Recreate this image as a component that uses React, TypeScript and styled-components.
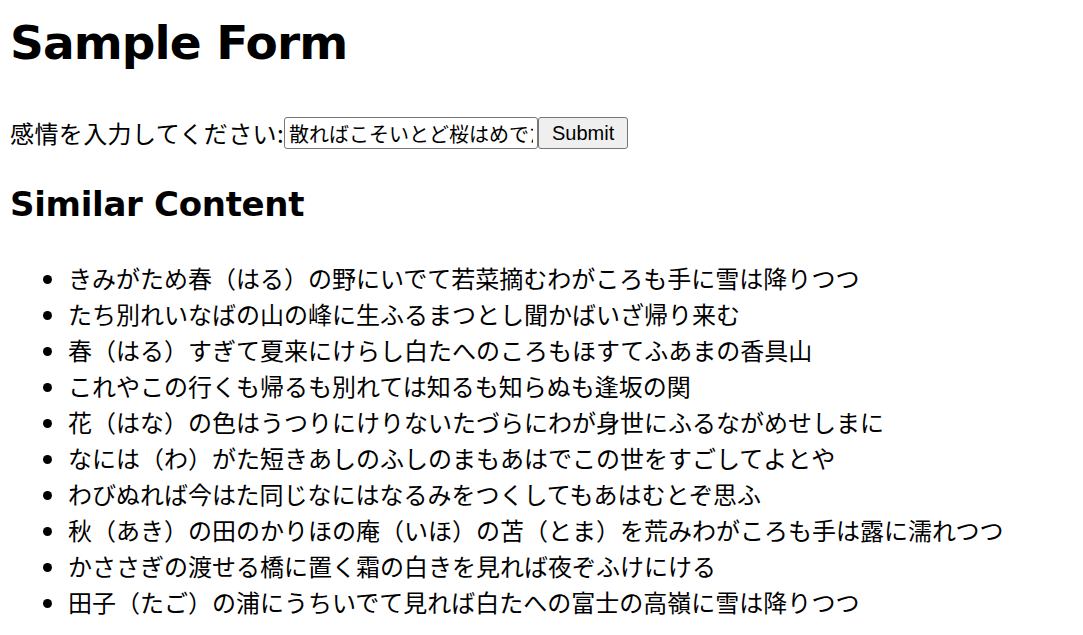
import React from "react";
import styled, { createGlobalStyle } from "styled-components";

const GlobalStyle = createGlobalStyle`
  html, body {
    margin: 0;
    padding: 0;
    background: #ffffff;
  }
  body {
    font-family: "Noto Sans CJK JP", "Noto Sans", sans-serif;
    color: #000000;
  }
`;

const Page = styled.div`
  padding: 7px 10px 0 10px;
`;

const Title = styled.h1`
  margin: 0;
  font-family: "DejaVu Sans", "Noto Sans CJK JP", sans-serif;
  font-weight: 700;
  font-size: 47px;
  line-height: 72px;
  letter-spacing: -0.9px;
`;

const Form = styled.form`
  display: flex;
  align-items: center;
  height: 36px;
  margin-top: 36px;
`;

const Label = styled.label`
  font-size: 24px;
  line-height: 36px;
  letter-spacing: 0.4px;
`;

const TextInput = styled.input`
  box-sizing: border-box;
  width: 254px;
  height: 32px;
  margin: 0;
  padding: 0 4px;
  border: 1px solid #767676;
  border-radius: 3px;
  font-family: "Noto Sans CJK JP", sans-serif;
  font-size: 20px;
  color: #000;
  background: #fff;
  outline: none;
`;

const Button = styled.button`
  box-sizing: border-box;
  height: 32px;
  margin: 0;
  padding: 0 13px;
  border: 1px solid #767676;
  border-radius: 3px;
  background: #efefef;
  font-family: "Liberation Sans", Arial, sans-serif;
  font-size: 20px;
  color: #000;
`;

const Subtitle = styled.h2`
  margin: 26px 0 0 0;
  font-family: "DejaVu Sans", "Noto Sans CJK JP", sans-serif;
  font-weight: 700;
  font-size: 34px;
  line-height: 54px;
  letter-spacing: -0.3px;
`;

const List = styled.ul`
  margin: 29px 0 0 0;
  padding-left: 58px;
  list-style: disc;
`;

const Item = styled.li`
  font-size: 24px;
  line-height: 36px;
  white-space: nowrap;
`;

const poems = [
  "きみがため春（はる）の野にいでて若菜摘むわがころも手に雪は降りつつ",
  "たち別れいなばの山の峰に生ふるまつとし聞かばいざ帰り来む",
  "春（はる）すぎて夏来にけらし白たへのころもほすてふあまの香具山",
  "これやこの行くも帰るも別れては知るも知らぬも逢坂の関",
  "花（はな）の色はうつりにけりないたづらにわが身世にふるながめせしまに",
  "なには（わ）がた短きあしのふしのまもあはでこの世をすごしてよとや",
  "わびぬれば今はた同じなにはなるみをつくしてもあはむとぞ思ふ",
  "秋（あき）の田のかりほの庵（いほ）の苫（とま）を荒みわがころも手は露に濡れつつ",
  "かささぎの渡せる橋に置く霜の白きを見れば夜ぞふけにける",
  "田子（たご）の浦にうちいでて見れば白たへの富士の高嶺に雪は降りつつ",
];

export default function App() {
  return (
    <Page>
      <GlobalStyle />
      <Title>Sample Form</Title>
      <Form onSubmit={(e) => e.preventDefault()}>
        <Label htmlFor="emotion">感情を入力してください:</Label>
        <TextInput
          id="emotion"
          type="text"
          defaultValue="散ればこそいとど桜はめでたけれ憂き世になにか久しかるべき"
        />
        <Button type="submit">Submit</Button>
      </Form>
      <Subtitle>Similar Content</Subtitle>
      <List>
        {poems.map((p) => (
          <Item key={p}>{p}</Item>
        ))}
      </List>
    </Page>
  );
}
